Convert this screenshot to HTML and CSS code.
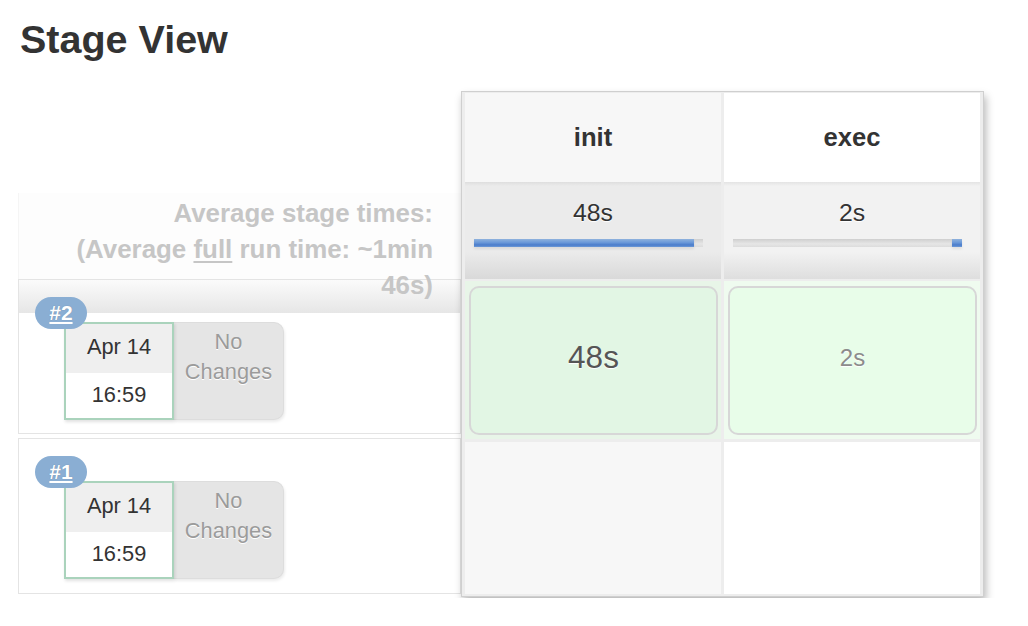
FILE: index.html
```html
<!DOCTYPE html>
<html>
<head>
<meta charset="utf-8">
<title>Stage View</title>
<link rel="stylesheet" href="styles.css">
</head>
<body>
<h2 class="title">Stage View</h2>
<div class="stage-view">
  <div class="runs">
    <div class="avg-label">Average stage times:<br>(Average <u>full</u> run time: ~1min<br>46s)</div>
    <div class="run run-latest">
      <a class="badge">#2</a>
      <div class="changeset">
        <div class="date">
          <div class="date-day">Apr 14</div>
          <div class="date-time">16:59</div>
        </div>
        <div class="changes">No<br>Changes</div>
      </div>
    </div>
    <div class="run">
      <a class="badge">#1</a>
      <div class="changeset">
        <div class="date">
          <div class="date-day">Apr 14</div>
          <div class="date-time">16:59</div>
        </div>
        <div class="changes">No<br>Changes</div>
      </div>
    </div>
  </div>
  <div class="panel">
    <div class="prow head">
      <div class="cell odd">init</div>
      <div class="cell even">exec</div>
    </div>
    <div class="prow avg">
      <div class="cell odd">
        <div class="avg-time">48s</div>
        <div class="bar"><div class="bar-fill" style="width:220px"></div></div>
      </div>
      <div class="cell even">
        <div class="avg-time">2s</div>
        <div class="bar"><div class="bar-fill" style="width:10px;margin-left:219px"></div></div>
      </div>
    </div>
    <div class="prow result">
      <div class="cell odd"><div class="box big">48s</div></div>
      <div class="cell even"><div class="box small">2s</div></div>
    </div>
    <div class="prow empty">
      <div class="cell odd"></div>
      <div class="cell even"></div>
    </div>
  </div>
</div>
</body>
</html>
```
FILE: styles.css
```css
* { box-sizing: border-box; }
body {
  margin: 0;
  background: #fff;
  font-family: "Liberation Sans", Helvetica, Arial, sans-serif;
  color: #333;
}
.title {
  margin: 20px 0 0 20px;
  font-size: 39.5px;
  line-height: 39px;
  font-weight: bold;
  color: #333;
}
.stage-view {
  display: flex;
  align-items: flex-start;
  margin-top: 32px;
  padding-left: 18px;
}
.runs {
  width: 443px;
  padding-top: 102px;
}
.avg-label {
  position: relative;
  z-index: 1;
  height: 86px;
  padding: 2px 28px 0 6px;
  background: #fdfdfd;
  border-left: 1px solid #f5f5f5;
  text-align: right;
  white-space: nowrap;
  font-size: 25.9px;
  line-height: 36px;
  font-weight: bold;
  color: #c6c6c6;
}
.avg-label u { text-decoration-thickness: 2px; text-underline-offset: 3px; }
.run {
  position: relative;
  height: 156px;
  border: 1px solid #e4e4e4;
  padding: 42px 0 0 45px;
  margin-bottom: 4px;
  background: #fff;
}
.run-latest {
  height: 155px;
  background: linear-gradient(#fbfbfb, #e6e6e6) no-repeat;
  background-size: 100% 33px;
}
.badge {
  position: absolute;
  top: 17px;
  left: 16px;
  z-index: 2;
  width: 52px;
  height: 32px;
  border-radius: 16px;
  background: #8aaed3;
  color: #fff;
  font-weight: bold;
  font-size: 21px;
  line-height: 32px;
  text-align: center;
  text-decoration: underline;
  text-decoration-thickness: 2px;
  text-underline-offset: 2px;
  text-shadow: 0 0 1px rgba(0,0,0,.25);
}
.changeset {
  display: flex;
}
.date {
  width: 110px;
  height: 98px;
  border: 2px solid #aad3bc;
  display: flex;
  flex-direction: column;
  box-shadow: 1px 2px 3px rgba(0,0,0,.12);
  position: relative;
  z-index: 1;
}
.date-day, .date-time {
  flex: 1;
  display: flex;
  align-items: center;
  justify-content: center;
  font-size: 21.8px;
  color: #333;
}
.date-day { background: #efefef; padding-bottom: 3px; }
.date-time { background: #fff; }
.changes {
  width: 110px;
  height: 98px;
  background: #e5e5e5;
  border: 1px solid #dddddd;
  border-left: none;
  border-radius: 0 10px 10px 0;
  text-align: center;
  padding-top: 4px;
  font-size: 21.8px;
  line-height: 30px;
  color: #9b9b9b;
  text-shadow: 0 1px 0 #fff;
  box-shadow: 1px 2px 3px rgba(0,0,0,.08);
}
.panel {
  width: 523px;
  border: 1px solid #cfcfcf;
  background: #ededed;
  padding: 1px 3px 2px 3px;
  box-shadow: 2px 5px 8px rgba(0,0,0,.28);
  position: relative;
  z-index: 3;
}
.prow {
  display: grid;
  grid-template-columns: 256px 256px;
  column-gap: 3px;
}
.head { height: 89px; }
.head .cell {
  display: flex;
  align-items: center;
  justify-content: center;
  font-weight: bold;
  font-size: 25.6px;
  color: #333;
}
.head .odd { background: #f7f7f7; }
.head .even { background: #fff; }
.avg { height: 97px; margin-bottom: 2px; }
.avg .cell { padding: 16px 0 0 9px; }
.avg .odd { background: linear-gradient(#dedede 0, #ebebeb 4px, #ebebeb 72%, #d9d9d9 100%); }
.avg .even { background: linear-gradient(#e4e4e4 0, #f2f2f2 4px, #f2f2f2 72%, #dedede 100%); }
.avg-time {
  text-align: center;
  padding-right: 9px;
  font-size: 24.8px;
  line-height: 30px;
  color: #333;
  text-shadow: 0 1px 1px #fff;
}
.bar {
  margin-top: 11px;
  width: 229px;
  height: 8px;
  display: flex;
  background: linear-gradient(#cfcfcf, #e6e6e6 60%, #dcdcdc);
}
.bar-fill {
  height: 8px;
  background: linear-gradient(#8fb2dd, #6a98d8 45%, #4a7ccb 75%, #6e9ad6);
  box-shadow: 0 2px 3px rgba(0,0,0,.08);
}
.result { height: 158px; margin-bottom: 3px; }
.result .cell { padding: 5px 3px 4px 4px; }
.result .odd { background: #e8f5e8; }
.result .even { background: #effbef; }
.box {
  height: 100%;
  border: 2px solid #d7d7d7;
  border-radius: 10px;
  display: flex;
  align-items: center;
  justify-content: center;
  padding-bottom: 6px;
  text-shadow: 0 1px 1px #fff;
}
.big { background: #e2f6e4; font-size: 31.5px; color: #555; }
.small { background: #e8fde9; font-size: 24px; color: #8c8c8c; }
.empty { height: 152px; }
.empty .odd { background: #f7f7f7; }
.empty .even { background: #fff; }
```
